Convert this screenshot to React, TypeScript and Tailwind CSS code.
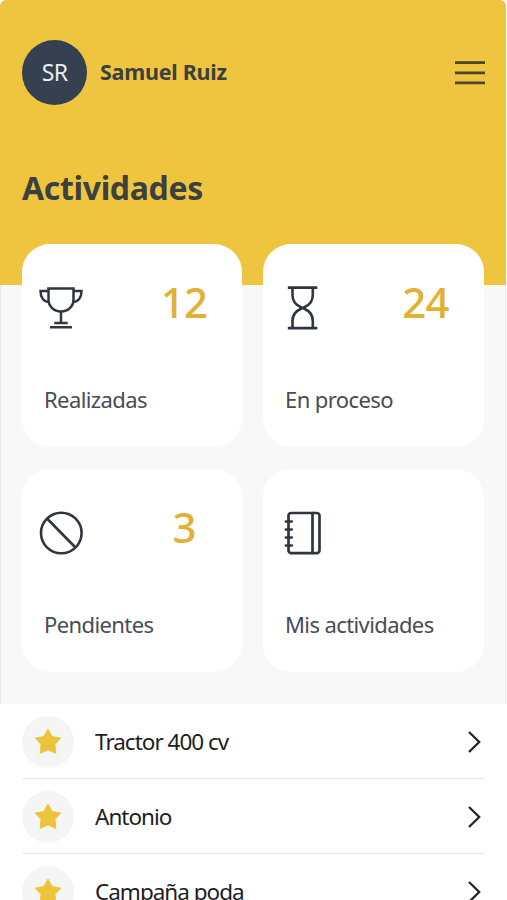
import type { ReactNode } from 'react';

function TrophyIcon() {
  return (
    <svg className="h-11 w-11" viewBox="0 0 44 44" fill="none" stroke="#2f3642" strokeWidth="2.500">
      <path d="M9.500 2.500H34.500V13.500C34.500 20.500 29 25.500 22 25.500S9.500 20.500 9.500 13.500Z" />
      <path d="M9.500 5H1.500C1.500 11 4.500 16 10.500 16" />
      <path d="M34.500 5H42.500C42.500 11 39.500 16 33.500 16" />
      <path d="M22 25.500V36.500M15.300 37H28.700M11 41.300H33" />
    </svg>
  );
}

function HourglassIcon() {
  return (
    <svg className="h-11 w-11" viewBox="0 0 44 44" fill="none" stroke="#2f3642" strokeWidth="2.600">
      <path d="M7.800 1.700H37.300M7.800 42.200H37.300" strokeWidth="2.700" />
      <path d="M12.500 2V9C12.500 16 17 19.500 21 21.200Q23 22 21 22.800C17 24.500 12.500 28 12.500 35V42" />
      <path d="M32.800 2V9C32.800 16 28.300 19.500 24.300 21.200Q22.300 22 24.300 22.800C28.300 24.500 32.800 28 32.800 35V42" />
    </svg>
  );
}

function BlockedIcon() {
  return (
    <svg className="h-11 w-11" viewBox="0 0 44 44" fill="none" stroke="#2f3642" strokeWidth="2.600">
      <circle cx="22.300" cy="22" r="20.300" />
      <path d="M8 7.500L36.500 36.500" />
    </svg>
  );
}

function NotebookIcon() {
  return (
    <svg className="h-11 w-11" viewBox="0 0 44 44" fill="none" stroke="#2f3642" strokeWidth="2.700" strokeLinecap="round">
      <rect x="8.500" y="2" width="31" height="40.200" rx="2.800" />
      <path d="M32.500 2V42" />
      <path d="M5.800 10.500H11.800M5.800 18.500H11.800M5.800 26.500H11.800M5.800 34.500H11.800" strokeWidth="2.500" />
    </svg>
  );
}

function Card({ icon, count, label }: { icon: ReactNode; count?: string; label: string }) {
  return (
    <div className="flex h-[203px] flex-col rounded-[28px] bg-white">
      <div className="flex h-[140px] items-start justify-between pt-[30px] pr-[28px] pl-[17px]">
        <div className="pt-3">{icon}</div>
        {count && (
          <div className="w-[60px] text-center text-[42px] leading-[56px] font-[550] tracking-[-0.8px] text-[#e2b034]">
            {count}
          </div>
        )}
      </div>
      <div className="pl-[22px] text-[22px] leading-[30px] tracking-[-0.6px] text-[#474c55]">{label}</div>
    </div>
  );
}

function Row({ label, size }: { label: string; size: string }) {
  return (
    <div className={`flex shrink-0 items-center border-[#e6e6e6] ${size}`}>
      <div className="flex h-[52px] w-[52px] items-center justify-center rounded-full bg-[#f5f5f5]">
        <svg className="h-7 w-7" viewBox="0 0 28 28" fill="#ecc339" stroke="#ecc339" strokeWidth="0.8" strokeLinejoin="round">
          <path d="M14 1L18.300 8.500L26.800 10L21 16.500L22 25.400L14 22L6 25.400L7 16.500L1.200 10L9.700 8.500Z" />
        </svg>
      </div>
      <div className="flex-1 pl-[21px] text-[22.5px] leading-[30px] tracking-[-1px] text-[#1d1d1f]">{label}</div>
      <svg className="mr-[3.500px] h-[22px] w-[13px]" viewBox="0 0 13 22" fill="none" stroke="#252527" strokeWidth="2.300">
        <path d="M1 1L11.200 11L1 21" />
      </svg>
    </div>
  );
}

export default function App() {
  return (
    <div className="h-[900px] w-[507px] overflow-hidden bg-white font-['Noto_Sans',sans-serif]">
      <main className="h-[704px] w-[506px] rounded-t-md border-x border-[#ececec] bg-[#f8f8f8]">
        <header className="-mx-px h-[285px] rounded-t-md bg-[#efc540] px-[22px] pt-10 text-[#3c4140]">
          <div className="flex h-[65px] items-center">
            <div className="flex h-[65px] w-[65px] items-center justify-center rounded-full bg-[#354050] text-[23px] tracking-[-0.7px] text-[#e9edf2]">
              SR
            </div>
            <div className="flex-1 pl-[13px] text-[21.5px] font-bold tracking-[-0.25px]">Samuel Ruiz</div>
            <svg className="mr-[-1px] h-[25px] w-[30px]" viewBox="0 0 30 25" stroke="#4b4428" strokeWidth="2.800">
              <path d="M0 2.700H30M0 12.800H30M0 22.800H30" />
            </svg>
          </div>
          <h1 className="mt-[61px] text-[32px] leading-[44px] font-bold tracking-[-0.35px]">Actividades</h1>
        </header>
        <section className="-mt-[41.500px] pl-[21px]">
          <div className="grid h-[428px] w-[461.500px] grid-cols-[220px_220.5px] gap-x-[21px] gap-y-[22px]">
            <Card icon={<TrophyIcon />} count="12" label="Realizadas" />
            <Card icon={<HourglassIcon />} count="24" label="En proceso" />
            <Card icon={<BlockedIcon />} count="3" label="Pendientes" />
            <Card icon={<NotebookIcon />} label="Mis actividades" />
          </div>
        </section>
      </main>
      <section className="flex h-[196px] flex-col overflow-hidden pt-px pr-[23px] pl-[22px]">
        <Row label="Tractor 400 cv" size="h-[74px] border-b" />
        <Row label="Antonio" size="h-[75px] border-b pt-px" />
        <Row label="Campaña poda" size="h-[75px] pt-px" />
      </section>
    </div>
  );
}
